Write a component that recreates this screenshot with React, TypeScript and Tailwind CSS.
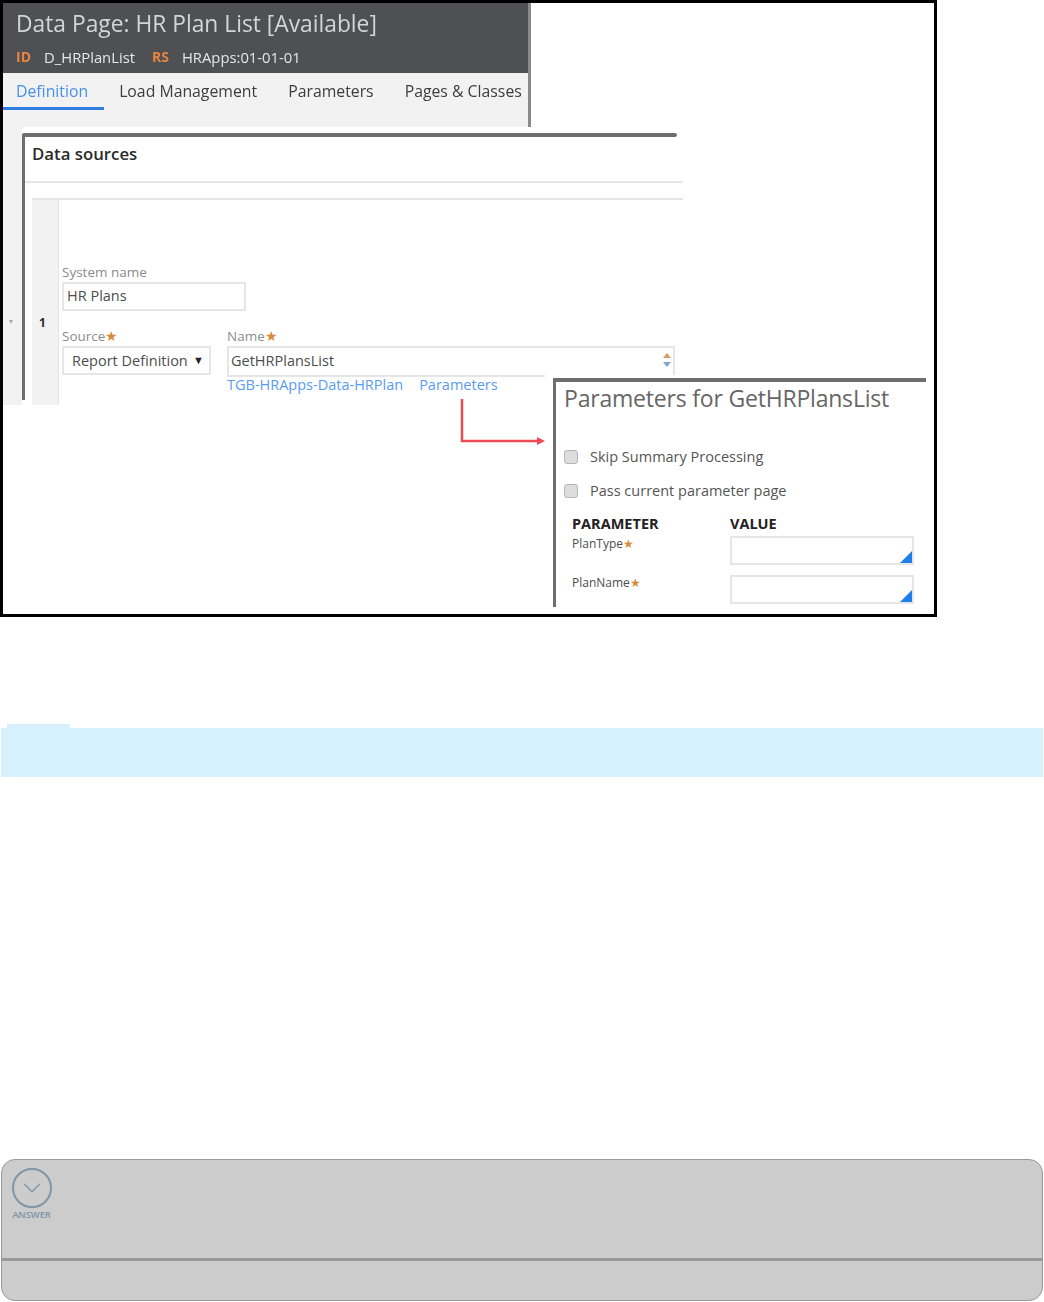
import { ChevronDown } from "lucide-react";

const font = "font-['Open_Sans',sans-serif]";

const Star = () => <span className="text-[#d98b3a]">★</span>;

const Tab = ({ label, active }: { label: string; active?: boolean }) => (
  <div
    className={
      active
        ? "h-[37px] pl-[13px] pr-[16px] pt-[8px] text-[#4a90e8] border-b-[3px] border-[#2f7de1]"
        : "h-[37px] pt-[8px] text-[#3d3d3d]"
    }
  >
    {label}
  </div>
);

const Triangle = () => (
  <svg width="12" height="12" viewBox="0 0 12 12" className="absolute right-0 bottom-0">
    <polygon points="12,0 12,12 0,12" fill="#1e7fe8" />
  </svg>
);

const Figure = () => (
  <div className={`w-[937px] h-[617px] border-[3px] border-black bg-white overflow-hidden ${font}`}>
    <div className="relative h-full blur-[0.5px]">
      {/* rule form window */}
      <div className="absolute left-0 top-0 w-[525px] border-r-[3px] border-[#8a8a8a] box-content">
        <div className="h-[70px] bg-[#4e5054] pl-[13px] pt-[5px]">
          <div className="text-[22.8px] leading-[32px] text-[#d5d5d5]">Data Page: HR Plan List [Available]</div>
          <div className="flex items-center mt-[7px] text-[14.8px] leading-[20px] text-[#e6e6e6]">
            <span className="text-[14px] font-bold text-[#e8853d] mr-[13px]">ID</span>
            <span className="mr-[17px]">D_HRPlanList</span>
            <span className="text-[14px] font-bold text-[#e8853d] mr-[13px]">RS</span>
            <span>HRApps:01-01-01</span>
          </div>
        </div>
        <div className="h-[54px] bg-[#f2f2f2]">
          <div className="flex gap-[31px] text-[15.8px] leading-[20px]">
            <div className="-mr-[16px]">
              <Tab label="Definition" active />
            </div>
            <Tab label="Load Management" />
            <Tab label="Parameters" />
            <Tab label="Pages & Classes" />
          </div>
        </div>
      </div>

      {/* side strip behind the data sources panel */}
      <div className="absolute left-0 top-[124px] w-[19px] h-[278px] bg-[#f2f2f2]">
        <span className="absolute left-[6px] top-[190px] text-[8px] leading-none text-[#aaaaaa]">▾</span>
      </div>

      {/* data sources panel */}
      <div className="absolute left-[19px] top-[130px] w-[661px] h-[267px] bg-white border-l-[3px] border-[#6e6e6e] rounded-tl-[2px]">
        <div className="w-[652px] h-[4px] bg-[#6e6e6e] rounded-r-[2px]" />
        <div className="h-[46px] border-b-2 border-[#e6e6e6] pl-[7px] pt-[5px] text-[16.8px] leading-[24px] font-semibold text-[#2b2b2b]">
          Data sources
        </div>
        <div className="flex h-[207px] mt-[15px] ml-[7px] border-t-2 border-[#e6e6e6]">
          <div className="w-[27px] bg-[#f2f2f2] border-r border-[#e4e4e4] pl-[7px] pt-[114px] text-[12px] leading-[18px] font-bold text-[#2b2b2b]">
            1
          </div>
          <div className="flex-1 pl-[3px] pt-[64px]">
            <div className="text-[13.5px] leading-[16px] text-[#8c8c8c]">System name</div>
            <div className="w-[184px] h-[29px] mt-[2px] border-2 border-[#e6e6e6] pl-[3px] text-[14.5px] leading-[24px] text-[#4d4d4d]">
              HR Plans
            </div>
            <div className="flex mt-[17px]">
              <div className="w-[165px]">
                <div className="text-[13.5px] leading-[16px] text-[#8c8c8c]">
                  Source<Star />
                </div>
                <div className="flex items-center justify-between w-[149px] h-[29px] mt-[2px] border-2 border-[#e6e6e6] pl-[8px] pr-[5px] text-[14.5px] text-[#4d4d4d]">
                  <span>Report Definition</span>
                  <span className="text-[11px] text-[#222222]">▼</span>
                </div>
              </div>
              <div>
                <div className="text-[13.5px] leading-[16px] text-[#8c8c8c]">
                  Name<Star />
                </div>
                <div className="relative w-[448px] h-[29px] mt-[2px] border-t-2 border-l-2 border-r-2 border-[#e6e6e6] pl-[2px] text-[14.5px] leading-[25px] text-[#4d4d4d]">
                  GetHRPlansList
                  <svg width="10" height="16" viewBox="0 0 10 16" className="absolute right-[1px] top-[4px]">
                    <polygon points="5,1 9,6 1,6" fill="#d79a64" />
                    <polygon points="1,10 9,10 5,15" fill="#7fa6cc" />
                  </svg>
                </div>
                <div className="w-[318px] border-t-2 border-[#e6e6e6]" />
                <div className="flex gap-[16px] -mt-[2px] text-[14.5px] leading-[20px] text-[#5b9bf0]">
                  <span>TGB-HRApps-Data-HRPlan</span>
                  <span>Parameters</span>
                </div>
              </div>
            </div>
          </div>
        </div>
      </div>

      {/* red connector */}
      <svg width="90" height="50" viewBox="0 0 90 50" className="absolute left-[455px] top-[395px]">
        <path d="M4 1 V43 H80" fill="none" stroke="#ef4b56" strokeWidth="2.5" />
        <polygon points="87,43 79,39 79,47" fill="#ef4b56" />
      </svg>

      {/* parameters dialog */}
      <div className="absolute left-[550px] top-[375px] w-[373px] h-[229px] bg-white border-l-[3px] border-t-[4px] border-[#6e6e6e] pl-[8px]">
        <div className="text-[23px] leading-[32px] tracking-[-0.2px] text-[#666666]">Parameters for GetHRPlansList</div>
        <div className="flex items-center mt-[33px] h-[20px] text-[14.5px] text-[#555555]">
          <span className="w-[14px] h-[14px] rounded-[3px] border border-[#b5b5b5] bg-[#dddddd] mr-[12px]" />
          Skip Summary Processing
        </div>
        <div className="flex items-center mt-[14px] h-[20px] text-[14.5px] text-[#555555]">
          <span className="w-[14px] h-[14px] rounded-[3px] border border-[#b5b5b5] bg-[#dddddd] mr-[12px]" />
          Pass current parameter page
        </div>
        <div className="grid grid-cols-[158px_184px] pl-[8px] mt-[14px]">
          <div className="text-[14.5px] leading-[18px] font-bold text-[#222222]">PARAMETER</div>
          <div className="text-[14.5px] leading-[18px] font-bold text-[#222222]">VALUE</div>
          <div className="mt-[3px] text-[12px] leading-[16px] text-[#4d4d4d]">
            PlanType<Star />
          </div>
          <div className="relative h-[29px] mt-[3px] border-2 border-[#e6e6e6]">
            <Triangle />
          </div>
          <div className="mt-[10px] text-[12px] leading-[16px] text-[#4d4d4d]">
            PlanName<Star />
          </div>
          <div className="relative h-[29px] mt-[10px] border-2 border-[#e6e6e6]">
            <Triangle />
          </div>
        </div>
      </div>
    </div>
  </div>
);

export default function App() {
  return (
    <div className={`w-[1044px] h-[1302px] bg-white ${font}`}>
      <Figure />
      <div className="mt-[107px] ml-[7px] w-[63px] h-[4px] bg-[#d7f0fd]" />
      <div className="ml-[1px] w-[1042px] h-[49px] bg-[#d7f0fd]" />
      <div className="mt-[382px] ml-[1px] w-[1042px] h-[142px] rounded-[14px] border-[1.5px] border-[#999999] bg-[#cccccc] flex flex-col">
        <div className="h-[90px] pl-[9px] pt-[8px] border-b-[3px] border-[#999999] box-content">
          <div className="flex flex-col items-center w-[41px]">
            <div className="flex items-center justify-center w-[40px] h-[40px] rounded-full border-2 border-[#7f95a8]">
              <ChevronDown size={30} strokeWidth={1.1} className="text-[#7f95a8]" />
            </div>
            <div className="mt-[1px] text-[9.5px] leading-[12px] font-semibold tracking-[-0.1px] text-[#7f95a8]">ANSWER</div>
          </div>
        </div>
      </div>
    </div>
  );
}
